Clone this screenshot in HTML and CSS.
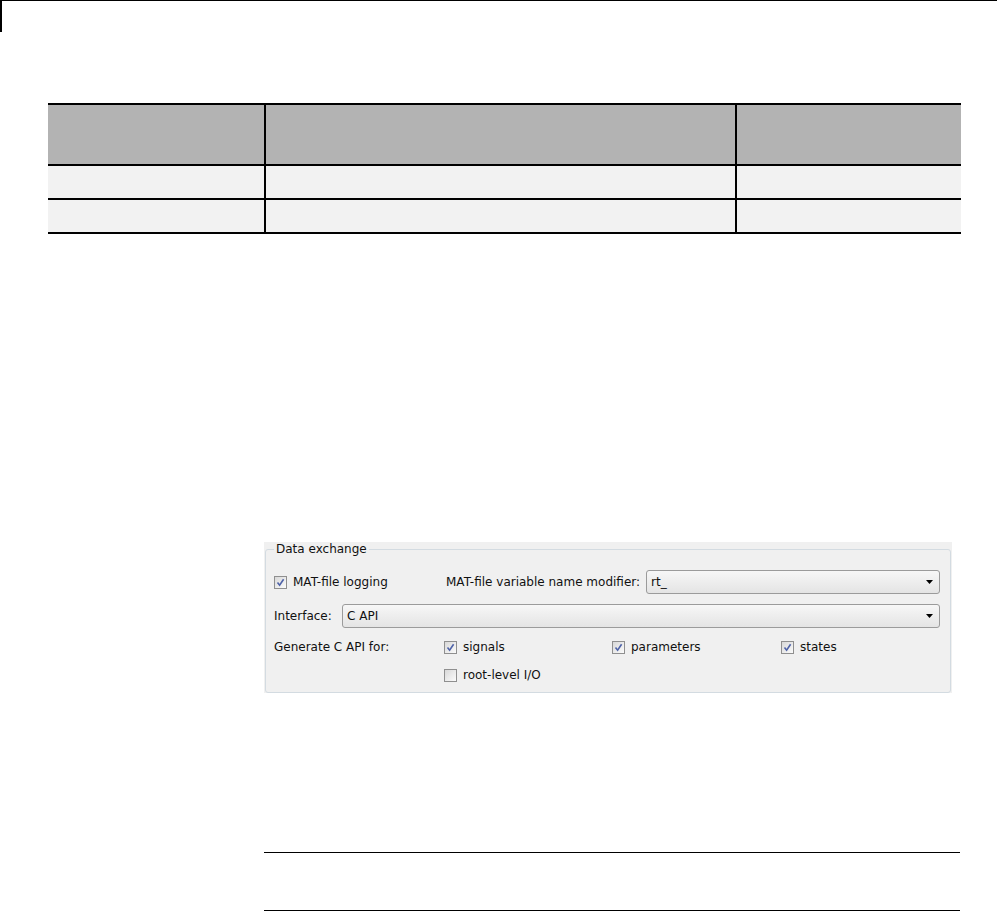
FILE: index.html
```html
<!DOCTYPE html>
<html>
<head>
<meta charset="utf-8">
<link rel="stylesheet" href="styles.css">
</head>
<body>
<div class="page-mark"></div>

<table class="grid-table">
  <thead>
    <tr><th class="c1"></th><th class="c2"></th><th class="c3"></th></tr>
  </thead>
  <tbody>
    <tr><td></td><td></td><td></td></tr>
    <tr><td></td><td></td><td></td></tr>
  </tbody>
</table>

<div class="panel">
  <fieldset class="group">
    <legend class="group-title">Data exchange</legend>
    <div class="row row-mat">
      <div class="mat-check">
        <span class="cb checked"><svg viewBox="0 0 11 11" width="11" height="11"><path d="M2.5 5.6 L4.6 8.2 L8.6 2.2" fill="none" stroke="#4f63a8" stroke-width="1.6"/></svg></span>
        <span class="lbl">MAT-file logging</span>
      </div>
      <span class="lbl modifier">MAT-file variable name modifier:</span>
      <div class="combo"><span class="combo-text">rt_</span><svg class="arrow" viewBox="0 0 7 4" width="7" height="4"><path d="M0 0 H7 L3.5 4 Z" fill="#000"/></svg></div>
    </div>
    <div class="row row-iface">
      <span class="lbl iface-label">Interface:</span>
      <div class="combo"><span class="combo-text">C API</span><svg class="arrow" viewBox="0 0 7 4" width="7" height="4"><path d="M0 0 H7 L3.5 4 Z" fill="#000"/></svg></div>
    </div>
    <div class="api-grid">
      <span class="lbl">Generate C API for:</span>
      <div class="opt"><span class="cb checked"><svg viewBox="0 0 11 11" width="11" height="11"><path d="M2.5 5.6 L4.6 8.2 L8.6 2.2" fill="none" stroke="#4f63a8" stroke-width="1.6"/></svg></span><span class="lbl">signals</span></div>
      <div class="opt"><span class="cb checked"><svg viewBox="0 0 11 11" width="11" height="11"><path d="M2.5 5.6 L4.6 8.2 L8.6 2.2" fill="none" stroke="#4f63a8" stroke-width="1.6"/></svg></span><span class="lbl">parameters</span></div>
      <div class="opt"><span class="cb checked"><svg viewBox="0 0 11 11" width="11" height="11"><path d="M2.5 5.6 L4.6 8.2 L8.6 2.2" fill="none" stroke="#4f63a8" stroke-width="1.6"/></svg></span><span class="lbl">states</span></div>
      <span></span>
      <div class="opt"><span class="cb"></span><span class="lbl">root-level I/O</span></div>
    </div>
  </fieldset>
</div>

<div class="note"></div>
</body>
</html>
```

FILE: styles.css
```css
html, body {
  margin: 0;
  padding: 0;
  background: #ffffff;
}

body {
  font-family: "DejaVu Sans", "Liberation Sans", sans-serif;
  font-size: 12px;
  color: #111;
}

.page-mark {
  height: 31px;
  border-top: 1px solid #000;
  border-left: 2px solid #000;
}

.grid-table {
  margin-top: 71px;
  margin-left: 48px;
  width: 909px;
  border-collapse: collapse;
  table-layout: fixed;
}

.grid-table th,
.grid-table td {
  padding: 0;
  border-left: 2px solid #000;
  border-bottom: 2px solid #000;
}

.grid-table th:first-child,
.grid-table td:first-child {
  border-left: none;
}

.grid-table th {
  background: #b3b3b3;
  height: 59px;
  border-top: 2px solid #000;
}

.grid-table td {
  background: #f2f2f2;
  height: 32px;
}

.c1 { width: 216px; }
.c2 { width: 469px; }
.c3 { width: 224px; }

.panel {
  margin-top: 308px;
  margin-left: 264px;
  width: 688px;
  background: #f0f0f0;
  padding: 0;
}

.group {
  margin: 0 1px 0 1px;
  padding: 14px 10px 7px 8px;
  border: 1px solid #d3dbe1;
  border-radius: 3px;
  min-width: 0;
}

.group-title {
  padding: 0 2px;
  line-height: 14px;
}

.lbl {
  white-space: nowrap;
  line-height: 14px;
}

.row {
  display: flex;
  align-items: center;
  height: 24px;
}

.row-iface {
  margin-top: 10px;
}

.mat-check {
  width: 172px;
  display: flex;
  align-items: center;
}

.modifier {
  margin-right: 6px;
}

.iface-label {
  width: 68px;
}

.combo {
  flex: 1;
  height: 22px;
  border: 1px solid #9b9b9b;
  border-radius: 3px;
  background: linear-gradient(#f7f7f7, #e4e4e4);
  display: flex;
  align-items: center;
  padding: 0 6px 0 4px;
}

.combo-text {
  flex: 1;
}

.arrow {
  display: block;
}

.cb {
  width: 11px;
  height: 11px;
  border: 1px solid #8f8f8f;
  background: linear-gradient(135deg, #d8d8d8, #fbfbfb);
  margin-right: 6px;
  display: inline-flex;
  flex: none;
}

.cb svg {
  display: block;
}

.api-grid {
  margin-top: 9px;
  display: grid;
  grid-template-columns: 170px 168px 169px 1fr;
  grid-auto-rows: 20px;
  row-gap: 8px;
  align-items: center;
}

.opt {
  display: flex;
  align-items: center;
}

.note {
  margin-top: 159px;
  margin-left: 264px;
  width: 696px;
  height: 57px;
  border-top: 1px solid #000;
  border-bottom: 1px solid #000;
}
```
